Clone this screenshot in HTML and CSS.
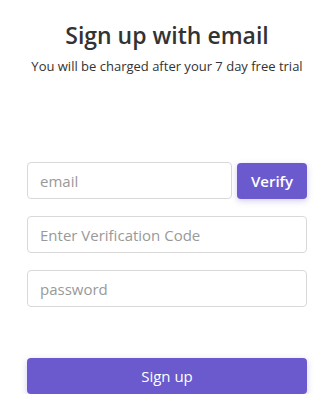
FILE: index.html
```html
<!DOCTYPE html>
<html lang="en">
<head>
  <meta charset="UTF-8" />
  <meta name="viewport" content="width=device-width, initial-scale=1.0"/>
  <title>Sign up</title>
  <link rel="stylesheet" href="styles.css">
</head>
<body>

  <div class="signup">
    <h2>Sign up with email</h2>
    <p class="subtitle">You will be charged after your 7 day free trial</p>

    <form class="form" onsubmit="return false">
      <div class="row">
        <input type="email" class="input" placeholder="email" />
        <button type="button" class="verify">Verify</button>
      </div>
      <input type="text" class="input" placeholder="Enter Verification Code" />
      <input type="password" class="input" placeholder="password" />

      <button type="submit" class="button">Sign up</button>
    </form>
  </div>

</body>
</html>
```

FILE: styles.css
```css
* {
  box-sizing: border-box;
}

body {
  margin: 0;
  font-family: "Open Sans", "Noto Sans", Arial, sans-serif;
  background-color: white;
  color: #333;
}

.signup {
  width: 280px;
  margin: 0 auto;
  padding-top: 18px;
}

h2 {
  margin: 0;
  font-size: 23px;
  font-weight: 600;
  text-align: center;
  line-height: 34px;
  color: #333;
}

.subtitle {
  margin: 4px -20px 0;
  font-size: 13px;
  text-align: center;
  color: #333;
  line-height: 20px;
}

.form {
  display: flex;
  flex-direction: column;
  gap: 17px;
  margin-top: 86px;
}

.row {
  display: flex;
  gap: 5px;
  align-items: center;
}

.input {
  width: 100%;
  height: 37px;
  padding: 0 12px;
  border: 1px solid #d9d9d9;
  border-radius: 4px;
  font-family: inherit;
  font-size: 15px;
  color: #333;
  outline: none;
}

.input::placeholder {
  color: #999;
}

.verify {
  flex: none;
  width: 70px;
  height: 36px;
  border: none;
  border-radius: 4px;
  background-color: #6a5acd;
  color: white;
  font-family: inherit;
  font-size: 15px;
  font-weight: 600;
  box-shadow: 0 2px 6px rgba(106, 90, 205, 0.3);
  cursor: pointer;
}

.button {
  margin-top: 34px;
  height: 36px;
  border: none;
  border-radius: 4px;
  background-color: #6a5acd;
  color: white;
  font-family: inherit;
  font-size: 15px;
  box-shadow: 0 2px 6px rgba(106, 90, 205, 0.3);
  cursor: pointer;
}
```
